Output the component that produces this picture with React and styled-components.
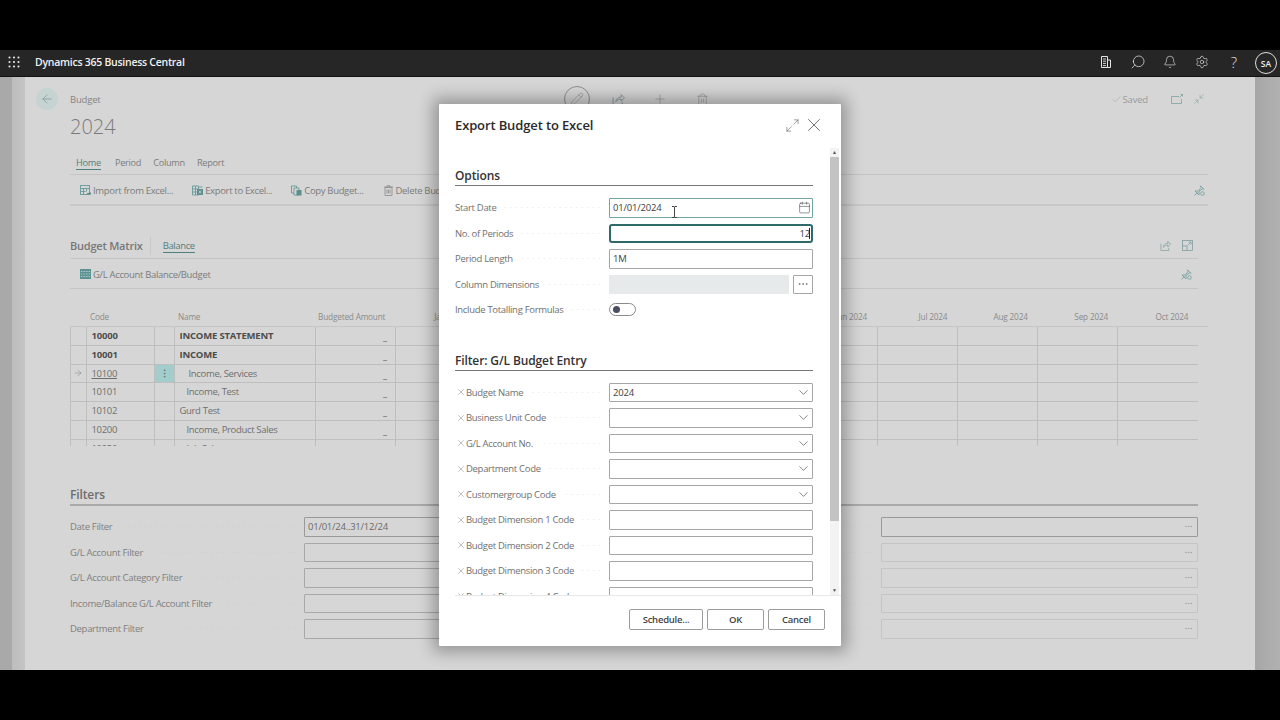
import React from 'react';
import styled, { createGlobalStyle } from 'styled-components';
import { ArrowLeft, ArrowRight, Bell, Calendar, Check, ChevronDown, Ellipsis, EllipsisVertical, Maximize2, Minimize2, Pencil, Plus, Search, Settings, Trash2, X } from 'lucide-react';

const Global = createGlobalStyle`
  html, body { margin: 0; padding: 0; background: #000; }
  body { font-family: "Open Sans", "Noto Sans", sans-serif; font-size: 10px; color: #6e6e6e; }
  * { box-sizing: border-box; }
`;

const Screen = styled.div`width: 1280px; height: 720px; display: flex; flex-direction: column; overflow: hidden; background: #000;`;
const Letterbox = styled.div`height: 50px; flex: none; background: #000;`;
const Frame = styled.div`position: relative; height: 620px; flex: none; display: flex; flex-direction: column; background: #2a2a2a;`;

const NavBar = styled.header`height: 27px; flex: none; background: #262626; border-bottom: 1px solid #111; display: flex; align-items: center; color: #eee; padding: 0 0 2px 8px;`;
const Waffle = styled.svg`width: 12px; height: 12px; margin-right: 15px; flex: none;`;
const Brand = styled.div`font-size: 10.5px; font-weight: 600; color: #f0f0f0; flex: 1; letter-spacing: -0.025em;`;
const NavIcon = styled.span`width: 32px; display: flex; justify-content: center; align-items: center; color: #e4e4e4; font-size: 15px; font-weight: 300; line-height: 1; & svg { display: block; }`;
const Avatar = styled.span`width: 22px; height: 22px; border-radius: 50%; border: 1px solid #ddd; margin: 2px 3px 0 5px; display: flex; align-items: center; justify-content: center; font-size: 8.5px; font-weight: 600; color: #eee;`;

const Desk = styled.div`flex: 1; display: flex; min-height: 0; background: #ababab;`;
const GutterLeft = styled.div`width: 25px; flex: none; background: linear-gradient(90deg, #a9a9a9 0, #a9a9a9 12px, #bdbdbd 12px, #c4c4c4 25px);`;
const GutterRight = styled.div`width: 25px; flex: none; background: linear-gradient(90deg, #a6a6a6 0, #acacac 12px, #b0b0b0 25px);`;
const Page = styled.main`flex: 1; min-width: 0; background: #d6d6d6; padding: 11px 47px 0 45px; display: flex; flex-direction: column;`;

const HeaderRow = styled.div`height: 22px; display: flex; align-items: center; margin-right: -2px;`;
const BackButton = styled.span`width: 22px; height: 22px; border-radius: 50%; background: #c6d3d3; color: #6f8585; display: flex; align-items: center; justify-content: center; margin: 0 12px 0 -34px; flex: none;`;
const Crumb = styled.span`font-size: 9.5px; color: #868686; width: 494px; flex: none; letter-spacing: -0.02em;`;
const ToolGroup = styled.div`display: flex; align-items: center; flex: 1; color: #7f9797;`;
const EditCircle = styled.span`width: 26px; height: 26px; border-radius: 50%; border: 1px solid #8f8f8f; display: flex; align-items: center; justify-content: center; color: #8a8a8a; margin-right: 22px; flex: none;`;
const ShareTool = styled.span`display: flex; color: #7f9797; margin-right: 14px; flex: none;`;
const Tool = styled.span`width: 42px; display: flex; justify-content: center; flex: none; color: #8a8a8a;`;
const SavedText = styled.span`display: flex; align-items: center; gap: 1px; color: #9a9a9a; font-size: 9.5px; margin-right: 18px; letter-spacing: -0.02em;`;
const HeadIcon = styled.span`display: flex; justify-content: center; width: 22px; color: #7f9f9f; & svg { display: block; }`;

const PageTitle = styled.h1`margin: 2px 0 0; height: 30px; font-size: 20px; line-height: 30px; font-weight: 300; color: #7a7a7a;`;
const Tabs = styled.nav`height: 22px; margin-top: 11px; display: flex; gap: 12px; padding: 1px 0 0 6px; border-bottom: 1px solid #c4c4c4; font-size: 9.2px; letter-spacing: -0.03em;`;
const TabItem = styled.span`height: 16px; line-height: 17px; margin-right: ${p => p.$active ? 2 : 0}px; color: ${p => p.$active ? '#4f8080' : '#7c7c7c'}; border-bottom: ${p => p.$active ? '1px solid #4f8080' : '0'};`;
const ActionBar = styled.div`height: 31px; display: flex; align-items: center; padding: 1px 0 0 10px; border-bottom: 2px solid #c8c8c8; font-size: 9.5px; letter-spacing: -0.035em; color: #7c7c7c;`;
const Action = styled.span`display: flex; align-items: center; gap: 2px; margin-right: 19px; white-space: nowrap; & svg { display: block; flex: none; }`;
const BarEnd = styled.span`margin-left: auto; margin-right: ${p => p.$right || 3}px; color: #6f9a9a; display: flex;`;

const MatrixHead = styled.div`height: 25px; margin: 28px 10px 0 0; display: flex; align-items: center; border-bottom: 1px solid #c4c4c4;`;
const MatrixTitle = styled.span`font-size: 11px; font-weight: 600; color: #787878; padding-right: 7px; border-right: 1px solid #c8c8c8; height: 18px; line-height: 18px; letter-spacing: -0.02em;`;
const MatrixTab = styled.span`margin-left: 12px; font-size: 9.5px; color: #4f8080; border-bottom: 1px solid #4f8080; height: 14px; line-height: 13px; letter-spacing: -0.04em;`;
const MatrixIcons = styled.span`margin-left: auto; display: flex; color: #7f9f9f; margin-top: -2px;`;
const MatrixBar = styled(ActionBar)`height: 30px; margin-right: 10px; border-bottom-width: 1px; border-color: #c4c4c4;`;

const TableHead = styled.div`display: grid; grid-template-columns: 16px 68px 20px 141px repeat(11, 80.3px); height: 20px; margin-top: 18px; font-size: 8.2px; color: #8a8a8a; border-bottom: 1px solid #c6c6c6; letter-spacing: -0.02em;`;
const HeadCell = styled.span`line-height: 19px; white-space: nowrap; overflow: hidden; text-align: ${p => p.$right ? 'right' : 'left'}; padding: ${p => p.$right ? '0 10px 0 0' : '0 0 0 4px'};`;
const TableBody = styled.div`height: 119px; overflow: hidden; border-left: 1px solid #c0c0c0; width: 1128px;`;
const Row = styled.div`display: grid; grid-template-columns: 15.5px 68px 20px 141px repeat(11, 80.3px); height: 18.8px; border-bottom: 1px solid #bebebe;`;
const Cell = styled.span`border-right: 1px solid #bebebe; font-size: 9.5px; line-height: 18.6px; white-space: nowrap; overflow: hidden; padding-left: ${p => p.$indent || 0}px; font-weight: ${p => p.$bold ? 700 : 400}; color: ${p => p.$bold ? '#4d4d4d' : '#6f6f6f'}; text-decoration: ${p => p.$link ? 'underline' : 'none'}; background: ${p => p.$selected ? '#a2cdcd' : 'transparent'}; display: ${p => p.$center ? 'flex' : 'block'}; align-items: center; justify-content: center; letter-spacing: ${p => p.$bold ? '-0.02em' : '-0.035em'}; &:last-child { border-right: 0; }`;
const Dash = styled(Cell)`text-align: right; padding-right: 8px; font-weight: 600; color: #666; line-height: 20px;`;

const FiltersTitle = styled.h2`margin: 39px 10px 0 0; height: 21px; font-size: 12px; line-height: 20px; font-weight: 600; color: #6e6e6e; border-bottom: 2px solid #a9a9a9; letter-spacing: -0.01em;`;
const FilterGrid = styled.div`margin: 11px 10px 0 0; display: grid; grid-template-columns: 549px 549px; column-gap: 30px; row-gap: 6px;`;
const FilterRow = styled.div`display: flex; align-items: center; height: 19.5px; font-size: 9.5px; line-height: 21px; color: #808080; letter-spacing: -0.032em;`;
const Leader = styled.span`flex: 1; height: 1px; margin: 0 7px 0 6px; min-width: 0; background-image: radial-gradient(circle, ${p => p.$light ? '#b5b5b5' : '#bdbdbd'} 0.6px, transparent 0.7px); background-size: 5.5px 2px; background-position: right center;`;
const FilterField = styled.span`width: ${p => p.$w || 317}px; flex: none; height: 19.5px; border: 1px solid ${p => p.$strong ? '#9a9a9a' : p.$faint ? '#c4c4c4' : '#a8a8a8'}; border-radius: 1px; display: flex; align-items: center; justify-content: space-between; padding: 0 3px; color: #6a6a6a; font-size: 9.5px; letter-spacing: -0.025em;`;
const Dots = styled.span`color: #9a9a9a; display: flex; margin-right: 1px;`;

const Dialog = styled.section`position: absolute; left: 439px; top: 54px; width: 402px; height: 542px; background: #fff; display: flex; flex-direction: column; box-shadow: 0 0 16px 6px rgba(0, 0, 0, .3); border-radius: 1px;`;
const DialogHead = styled.div`height: 44px; flex: none; display: flex; align-items: center; padding: 0 16px 2px 16px;`;
const DialogTitle = styled.h2`margin: 0; flex: 1; font-size: 13px; font-weight: 600; color: #2b2b2b; letter-spacing: -0.01em;`;
const HeadAction = styled.span`display: flex; color: #666; margin-left: ${p => p.$gap || 0}px;`;
const DialogBody = styled.div`flex: 1; min-height: 0; display: flex;`;
const Form = styled.div`width: 374px; flex: none; overflow: hidden; padding: 18px 0 0 16px;`;
const Group = styled.h3`margin: ${p => p.$second ? '31px' : '0'} 0 12px; height: 20px; font-size: 12px; font-weight: 600; line-height: 19px; color: #333; border-bottom: 1px solid #777; letter-spacing: -0.01em;`;
const FormRow = styled.div`display: flex; align-items: center; height: 19.5px; margin-bottom: 6px; font-size: 9.5px; color: #707070; letter-spacing: -0.032em;`;
const LabelCell = styled.div`width: 154px; flex: none; display: flex; align-items: center; white-space: nowrap;`;
const ClearMark = styled.span`width: 11px; flex: none; display: flex; justify-content: center; color: #7a7a7a;`;
const Field = styled.div`position: relative; width: 204px; flex: none; height: 19.5px; background: #fff; border: ${p => p.$focus ? '2px solid #2f6a6a' : p.$soft ? '1px solid #6fa5a5' : '1px solid #a6a6a6'}; border-radius: ${p => p.$focus ? 3 : 1}px; display: flex; align-items: center; justify-content: ${p => p.$end ? 'flex-end' : 'space-between'}; padding: 0 ${p => p.$focus ? 1 : 3}px; font-size: 9.5px; color: #404040; letter-spacing: -0.02em; & > svg { margin-right: -2px; flex: none; }`;
const Caret = styled.i`position: absolute; right: 1px; top: 2px; bottom: 2px; width: 1px; background: #222;`;
const IBeam = styled.svg`position: absolute; left: 61px; top: 7px; width: 7px; height: 12px; color: #444;`;
const MutedField = styled.div`width: 180px; height: 19.5px; flex: none; background: #e7eaea;`;
const LookupButton = styled.span`width: 20px; height: 19.5px; margin-left: 4px; flex: none; border: 1px solid #a6a6a6; border-radius: 1px; display: flex; align-items: center; justify-content: center; color: #555;`;
const Toggle = styled.span`width: 27px; height: 13px; border-radius: 7px; border: 1px solid #8a8a8a; background: #fff; display: flex; align-items: center; padding-left: 3px;`;
const Knob = styled.i`width: 7px; height: 7px; border-radius: 50%; background: #4b4f63;`;

const ScrollBar = styled.div`width: 9px; margin-left: 17px; flex: none; display: flex; flex-direction: column; background: #f3f3f3;`;
const ScrollArrow = styled.span`height: 9px; flex: none; display: flex; align-items: center; justify-content: center; font-size: 5px; line-height: 1; color: #555;`;
const ScrollThumb = styled.div`height: 364px; flex: none; background: #c3c3c3;`;
const ScrollTrack = styled.div`flex: 1;`;
const DialogFoot = styled.div`height: 51px; flex: none; margin: 0 0 0 16px; padding: 13px 16px 0 0; border-top: 1px solid #e8e8e8; display: flex; justify-content: flex-end; gap: 4px;`;
const FootButton = styled.button`width: ${p => p.$w}px; height: 20.5px; padding: 0; background: #fff; border: 1px solid #9c9c9c; border-radius: 2px; font: 600 9.5px "Open Sans", "Noto Sans", sans-serif; color: #444; letter-spacing: -0.025em;`;

const tealFill = '#6f9f9f';

const ImportIcon = () => (<svg width="11" height="11" viewBox="0 0 11 11" fill="none" stroke={tealFill} strokeWidth="1"><rect x=".5" y=".5" width="9" height="9" /><path d="M.5 3.5h9M.5 6.5h5M3.5 3.5v6M6.5 3.5v3" /><path d="M7 8.5h4M9.5 7l1.5 1.5L9.5 10" stroke="#5d8d8d" /></svg>);
const ExportIcon = () => (<svg width="11" height="11" viewBox="0 0 11 11" fill="none" stroke={tealFill}><path d="M.5 1h6v9h-6zM.5 4h6M.5 7h6M3.5 1v9M6.5 2h4" /><rect x="5" y="4" width="6" height="6" fill="#5d8d8d" stroke="none" /><path d="M6.7 5.5l2.6 3M9.3 5.5l-2.6 3" stroke="#ddd" strokeWidth=".7" /></svg>);
const CopyIcon = () => (<svg width="11" height="11" viewBox="0 0 11 11" fill="none" stroke={tealFill}><path d="M.5 1h5v7h-5z" /><path d="M3 3h5v7H3z" fill="#d6d6d6" /><rect x="5.5" y="5" width="5" height="5.5" fill="#5d8d8d" stroke="none" /></svg>);
const TrashIcon = () => (<svg width="11" height="11" viewBox="0 0 11 11" fill="none" stroke="#8a8a8a"><path d="M2 2.5h7v8H2zM1 2h9M4 2V.7h3V2M4 4.5v4M5.5 4.5v4M7 4.5v4" strokeWidth=".8" /></svg>);
const BalanceIcon = () => (<svg width="11" height="10" viewBox="0 0 11 10"><rect width="11" height="10" fill="#5d9292" /><path d="M1 2.5h9M1 5h9M1 7.5h9" stroke="#d3e3e3" strokeWidth=".7" strokeDasharray="1 .6" /></svg>);
const PinOff = () => (<svg width="11" height="11" viewBox="0 0 11 11" fill="none" stroke="currentColor" strokeWidth=".8"><path d="M1 6h3.5L7 2.5 6.5.8l3.5 3.5-1.6-.4L5 6.500V10L1 6z" /><path d="M.5 10.5l3-3" /><circle cx="8.5" cy="8.5" r="1.8" /></svg>);
const ShareBox = ({ size = 12 }) => (<svg width={size} height={size} viewBox="0 0 12 12" fill="none" stroke="currentColor" strokeWidth=".8"><path d="M1 4v7.5h8.5V8.5" /><path d="M3.5 8c.4-3 2.6-4.2 5-4.2V1.500L11.5 4.600 8.500 7.500V5.600C6.700 5.600 4.800 6.200 3.500 8z" /></svg>);
const PopOut = () => (<svg width="12" height="10" viewBox="0 0 12 10" fill="none" stroke="currentColor" strokeWidth=".8"><path d="M8 2.5H.5v7h10V5" /><path d="M8.5 3.5l3-3M9.500.5h2v2" /></svg>);
const FrameExpand = () => (<svg width="11" height="11" viewBox="0 0 11 11" fill="none" stroke="currentColor" strokeWidth=".8"><rect x=".5" y=".5" width="10" height="10" /><path d="M.5 6h4.500v4.500M5.500 5.500l3.500-3.500M6.500 2H9v2.500" /></svg>);
const DocIcon = () => (<svg width="10" height="12" viewBox="0 0 10 12" fill="none" stroke="currentColor" strokeWidth="1"><path d="M.5.5h6v11h-6zM6.500 4H9.500v7.500h-3" /><path d="M2 3h3M2 5.200h3M2 7.400h3M2 9.600h3" strokeWidth=".9" /></svg>);
const Cursor = () => (<IBeam viewBox="0 0 7 12" fill="none" stroke="currentColor" strokeWidth="1"><path d="M1 .5h2l.5.5.5-.5h2M3.500 1v10M1 11.500h2l.5-.5.5.5h2" /></IBeam>);

const tableRows = [
  { code: '10000', name: 'INCOME STATEMENT', bold: true, indent: 0 },
  { code: '10001', name: 'INCOME', bold: true, indent: 0 },
  { code: '10100', name: 'Income, Services', indent: 9, current: true },
  { code: '10101', name: 'Income, Test', indent: 7 },
  { code: '10102', name: 'Gurd Test', indent: 0 },
  { code: '10200', name: 'Income, Product Sales', indent: 7 },
  { code: '10250', name: 'Job Sales', indent: 7 },
];
const months = ['Jan', 'Feb', 'Mar', 'Apr', 'May', 'Jun', 'Jul', 'Aug', 'Sep', 'Oct'];
const hiddenMonths = ['Feb', 'Mar', 'Apr', 'May'];
const filters = ['Date Filter', 'G/L Account Filter', 'G/L Account Category Filter', 'Income/Balance G/L Account Filter', 'Department Filter'];
const entryFilters = [
  ['Budget Name', true, '2024'], ['Business Unit Code', true], ['G/L Account No.', true], ['Department Code', true], ['Customergroup Code', true],
  ['Budget Dimension 1 Code'], ['Budget Dimension 2 Code'], ['Budget Dimension 3 Code'], ['Budget Dimension 4 Code'],
];

export default function App() {
  return (
    <Screen>
      <Global />
      <Letterbox />
      <Frame>
        <NavBar>
          <Waffle viewBox="0 0 12 12" fill="#e8e8e8">
            {[1.5, 6, 10.5].flatMap(y => [1.5, 6, 10.5].map(x => <circle key={`${x}-${y}`} cx={x} cy={y} r="1.05" />))}
          </Waffle>
          <Brand>Dynamics 365 Business Central</Brand>
          <NavIcon><DocIcon /></NavIcon>
          <NavIcon><Search size={16} strokeWidth={1.1} style={{ transform: 'scaleX(-1)' }} /></NavIcon>
          <NavIcon><Bell size={14} strokeWidth={1.1} /></NavIcon>
          <NavIcon><Settings size={14} strokeWidth={1.1} /></NavIcon>
          <NavIcon>?</NavIcon>
          <Avatar>SA</Avatar>
        </NavBar>
        <Desk>
          <GutterLeft />
          <Page>
            <HeaderRow>
              <BackButton><ArrowLeft size={14} strokeWidth={1} /></BackButton>
              <Crumb>Budget</Crumb>
              <ToolGroup>
                <EditCircle><Pencil size={14} strokeWidth={1} /></EditCircle>
                <ShareTool><ShareBox size={13} /></ShareTool>
                <Tool><Plus size={14} strokeWidth={1} /></Tool>
                <Tool><Trash2 size={13} strokeWidth={1} /></Tool>
              </ToolGroup>
              <SavedText><Check size={11} strokeWidth={1} />Saved</SavedText>
              <HeadIcon><PopOut /></HeadIcon>
              <HeadIcon><Minimize2 size={12} strokeWidth={1} /></HeadIcon>
            </HeaderRow>
            <PageTitle>2024</PageTitle>
            <Tabs>
              <TabItem $active>Home</TabItem>
              <TabItem>Period</TabItem>
              <TabItem>Column</TabItem>
              <TabItem>Report</TabItem>
            </Tabs>
            <ActionBar>
              <Action><ImportIcon />Import from Excel...</Action>
              <Action><ExportIcon />Export to Excel...</Action>
              <Action><CopyIcon />Copy Budget...</Action>
              <Action><TrashIcon />Delete Budget</Action>
              <BarEnd><PinOff /></BarEnd>
            </ActionBar>
            <MatrixHead>
              <MatrixTitle>Budget Matrix</MatrixTitle>
              <MatrixTab>Balance</MatrixTab>
              <MatrixIcons>
                <HeadIcon><ShareBox size={11} /></HeadIcon>
                <HeadIcon><FrameExpand /></HeadIcon>
              </MatrixIcons>
            </MatrixHead>
            <MatrixBar>
              <Action><BalanceIcon />G/L Account Balance/Budget</Action>
              <BarEnd $right={6}><PinOff /></BarEnd>
            </MatrixBar>
            <TableHead>
              <span /><HeadCell>Code</HeadCell><span /><HeadCell>Name</HeadCell>
              <HeadCell $right>Budgeted Amount</HeadCell>
              {months.map(m => <HeadCell $right key={m}>{hiddenMonths.includes(m) ? '' : `${m} 2024`}</HeadCell>)}
            </TableHead>
            <TableBody>
              {tableRows.map(r => (
                <Row key={r.code}>
                  <Cell $center>{r.current && <ArrowRight size={10} strokeWidth={1} />}</Cell>
                  <Cell $bold={r.bold} $link={r.current} $indent={5}>{r.code}</Cell>
                  <Cell $selected={r.current} $center>{r.current && <EllipsisVertical size={11} strokeWidth={1.5} />}</Cell>
                  <Cell $bold={r.bold} $indent={5 + r.indent}>{r.name}</Cell>
                  <Dash>_</Dash>
                  {months.map(m => <Cell key={m} />)}
                </Row>
              ))}
            </TableBody>
            <FiltersTitle>Filters</FiltersTitle>
            <FilterGrid>
              {filters.map((f, i) => (
                <React.Fragment key={f}>
                  <FilterRow>
                    {f}<Leader />
                    <FilterField $w={315} $strong={i === 0}>{i === 0 ? '01/01/24..31/12/24' : ''}</FilterField>
                  </FilterRow>
                  <FilterRow>
                    <Leader />
                    <FilterField $strong={i === 0} $faint={i > 0}><span /><Dots><Ellipsis size={9} strokeWidth={1.5} /></Dots></FilterField>
                  </FilterRow>
                </React.Fragment>
              ))}
            </FilterGrid>
          </Page>
          <GutterRight />
        </Desk>

        <Dialog>
          <DialogHead>
            <DialogTitle>Export Budget to Excel</DialogTitle>
            <HeadAction><Maximize2 size={15} strokeWidth={1} /></HeadAction>
            <HeadAction $gap={3}><X size={22} strokeWidth={1} /></HeadAction>
          </DialogHead>
          <DialogBody>
            <Form>
              <Group>Options</Group>
              <FormRow>
                <LabelCell>Start Date<Leader $light /></LabelCell>
                <Field $soft>01/01/2024<Cursor /><Calendar size={13} strokeWidth={1} /></Field>
              </FormRow>
              <FormRow>
                <LabelCell>No. of Periods<Leader $light /></LabelCell>
                <Field $focus $end>12<Caret /></Field>
              </FormRow>
              <FormRow>
                <LabelCell>Period Length<Leader $light /></LabelCell>
                <Field>1M</Field>
              </FormRow>
              <FormRow>
                <LabelCell>Column Dimensions<Leader $light /></LabelCell>
                <MutedField />
                <LookupButton><Ellipsis size={12} strokeWidth={1.2} /></LookupButton>
              </FormRow>
              <FormRow>
                <LabelCell>Include Totalling Formulas<Leader $light /></LabelCell>
                <Toggle><Knob /></Toggle>
              </FormRow>
              <Group $second>Filter: G/L Budget Entry</Group>
              {entryFilters.map(([label, lookup, value]) => (
                <FormRow key={label}>
                  <LabelCell><ClearMark><X size={10} strokeWidth={1.1} /></ClearMark>{label}<Leader $light /></LabelCell>
                  <Field>{value || <span />}{lookup && <ChevronDown size={15} strokeWidth={1} />}</Field>
                </FormRow>
              ))}
            </Form>
            <ScrollBar>
              <ScrollArrow>▲</ScrollArrow>
              <ScrollThumb />
              <ScrollTrack />
              <ScrollArrow>▼</ScrollArrow>
            </ScrollBar>
          </DialogBody>
          <DialogFoot>
            <FootButton $w={74}>Schedule...</FootButton>
            <FootButton $w={57}>OK</FootButton>
            <FootButton $w={57}>Cancel</FootButton>
          </DialogFoot>
        </Dialog>
      </Frame>
      <Letterbox />
    </Screen>
  );
}
